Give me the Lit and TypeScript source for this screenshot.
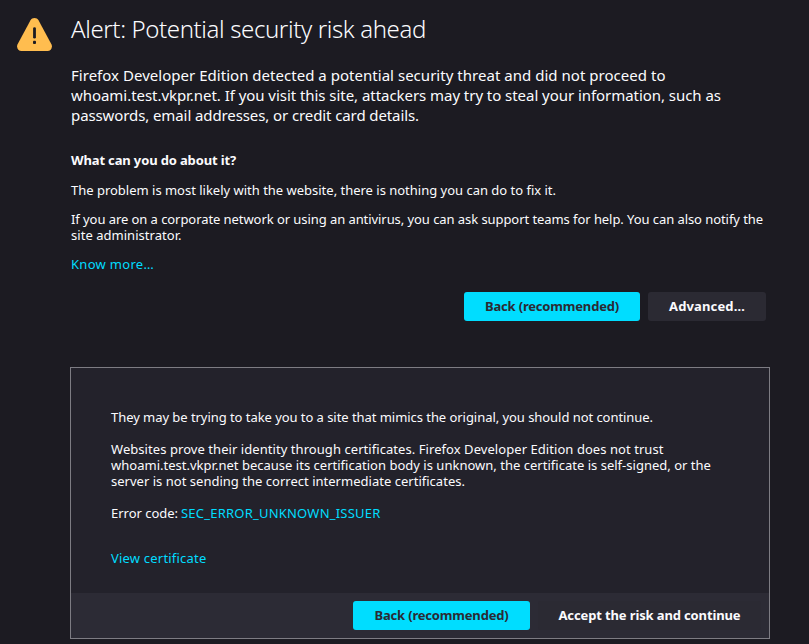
import { LitElement, html, css } from "lit";
import { customElement, property } from "lit/decorators.js";
import { styleMap } from "lit/directives/style-map.js";

/** A line of text and its tracking in pixels. */
type Line = [text: string, tracking: number];

const line = ([text, tracking]: Line) =>
  html`<span class="line" style=${styleMap({ letterSpacing: `${tracking}px` })}>${text}</span>`;

const lineStyles = css`
  .line {
    display: block;
    white-space: pre;
  }
`;

const INTRO: Line[] = [
  ["Firefox Developer Edition detected a potential security threat and did not proceed to", 0.027],
  ["whoami.test.vkpr.net. If you visit this site, attackers may try to steal your information, such as", -0.047],
  ["passwords, email addresses, or credit card details.", -0.099],
];

const ADVICE: Line[] = [
  ["If you are on a corporate network or using an antivirus, you can ask support teams for help. You can also notify the", -0.068],
  ["site administrator.", 0.036],
];

const REASON: Line[] = [
  ["Websites prove their identity through certificates. Firefox Developer Edition does not trust", 0.06],
  ["whoami.test.vkpr.net because its certification body is unknown, the certificate is self-signed, or the", 0.014],
  ["server is not sending the correct intermediate certificates.", 0.017],
];

@customElement("action-button")
export class ActionButton extends LitElement {
  @property() label = "";
  @property({ type: Number }) tracking = 0;
  @property({ type: Boolean, reflect: true }) primary = false;

  static styles = [
    lineStyles,
    css`
      :host {
        display: block;
      }
      .button {
        box-sizing: border-box;
        width: 100%;
        height: 29px;
        display: flex;
        justify-content: center;
        align-items: flex-start;
        margin: 0;
        padding: 6px 0 0;
        border: 0;
        border-radius: 3px;
        background: #2b2a33;
        color: #fbfbfe;
        font: 700 13px/16px "Noto Sans", sans-serif;
      }
      :host([primary]) .button {
        background: #00ddff;
        color: #2b2a33;
      }
    `,
  ];

  render() {
    return html`<button class="button">${line([this.label, this.tracking])}</button>`;
  }
}

@customElement("app-root")
export class AppRoot extends LitElement {
  static styles = [
    lineStyles,
    css`
      :host {
        display: block;
        box-sizing: border-box;
        height: 644px;
        overflow: hidden;
        background: #1c1b22;
        color: #fbfbfe;
        font: 13px/16px "Noto Sans", sans-serif;
      }
      .page {
        display: grid;
        grid-template-columns: 35px 700px;
        column-gap: 18px;
        padding: 13px 0 0 17px;
      }
      .warning {
        display: block;
        width: 35px;
        height: 33px;
        margin-top: 5px;
      }
      .content {
        padding-left: 1px;
      }
      .title {
        margin: 0 0 20px;
        font-size: 24px;
        font-weight: 300;
        line-height: 32px;
      }
      .intro {
        margin: 0 0 27px;
        font-size: 15px;
        line-height: 20px;
      }
      .question {
        margin: 0 0 14px;
        font-size: 13px;
        font-weight: 700;
      }
      .text {
        margin: 0 0 13px;
      }
      .link {
        display: inline-block;
        color: #00ddff;
        text-decoration: none;
      }
      .more {
        display: block;
        margin-bottom: 20px;
      }
      .actions {
        display: flex;
        justify-content: flex-end;
        gap: 8px;
        padding-right: 4px;
      }
      .back {
        width: 176px;
      }
      .advanced {
        width: 118px;
      }
      .panel {
        grid-column: 2;
        box-sizing: border-box;
        height: 272px;
        margin-top: 46px;
        border: 1px solid #7d7c83;
        background: #23222b;
        display: flex;
        flex-direction: column;
      }
      .details {
        flex: 1;
        padding: 41px 40px 0;
      }
      .details .text {
        margin-bottom: 16px;
      }
      .details .error {
        display: flex;
        gap: 3px;
        margin-bottom: 29px;
      }
      .footer {
        box-sizing: border-box;
        height: 45px;
        display: flex;
        justify-content: flex-end;
        gap: 8px;
        padding: 8px 8px 0;
        background: #2c2b35;
      }
      .footer .back {
        width: 177px;
      }
      .accept {
        width: 223px;
      }
    `,
  ];

  render() {
    return html`
      <main class="page">
        <svg class="warning" viewBox="0 0 35 33" aria-hidden="true">
          <path
            fill="#ffbd4f"
            d="M17.5 0 C19.2 0 20.7 .9 21.5 2.3 L34.4 26.2 C36 29.4 33.8 32.9 30.5 32.9 H4.5 C1.2 32.9 -1 29.4 .6 26.2 L13.5 2.3 C14.3 .9 15.8 0 17.5 0Z"
          />
          <rect x="16.1" y="9.2" width="2.8" height="11.4" rx="1.4" fill="#1c1b22" />
          <rect x="16" y="22.8" width="3" height="3.1" rx=".9" fill="#1c1b22" />
        </svg>
        <section class="content">
          <h1 class="title">${line(["Alert: Potential security risk ahead", -0.38])}</h1>
          <p class="intro">${INTRO.map(line)}</p>
          <h2 class="question">${line(["What can you do about it?", -0.143])}</h2>
          <p class="text">
            ${line(["The problem is most likely with the website, there is nothing you can do to fix it.", -0.01])}
          </p>
          <p class="text">${ADVICE.map(line)}</p>
          <div class="more"><a class="link">${line(["Know more…", 0.297])}</a></div>
          <div class="actions">
            <action-button class="back" primary label="Back (recommended)" tracking="-0.183"></action-button>
            <action-button class="advanced" label="Advanced…" tracking="0.148"></action-button>
          </div>
        </section>
        <section class="panel">
          <div class="details">
            <p class="text">
              ${line(["They may be trying to take you to a site that mimics the original, you should not continue.", -0.052])}
            </p>
            <p class="text">${REASON.map(line)}</p>
            <p class="text error">
              ${line(["Error code:", -0.021])}
              <a class="link">${line(["SEC_ERROR_UNKNOWN_ISSUER", 0.215])}</a>
            </p>
            <a class="link">${line(["View certificate", 0.206])}</a>
          </div>
          <div class="footer">
            <action-button class="back" primary label="Back (recommended)" tracking="-0.183"></action-button>
            <action-button class="accept" label="Accept the risk and continue" tracking="-0.129"></action-button>
          </div>
        </section>
      </main>
    `;
  }
}
